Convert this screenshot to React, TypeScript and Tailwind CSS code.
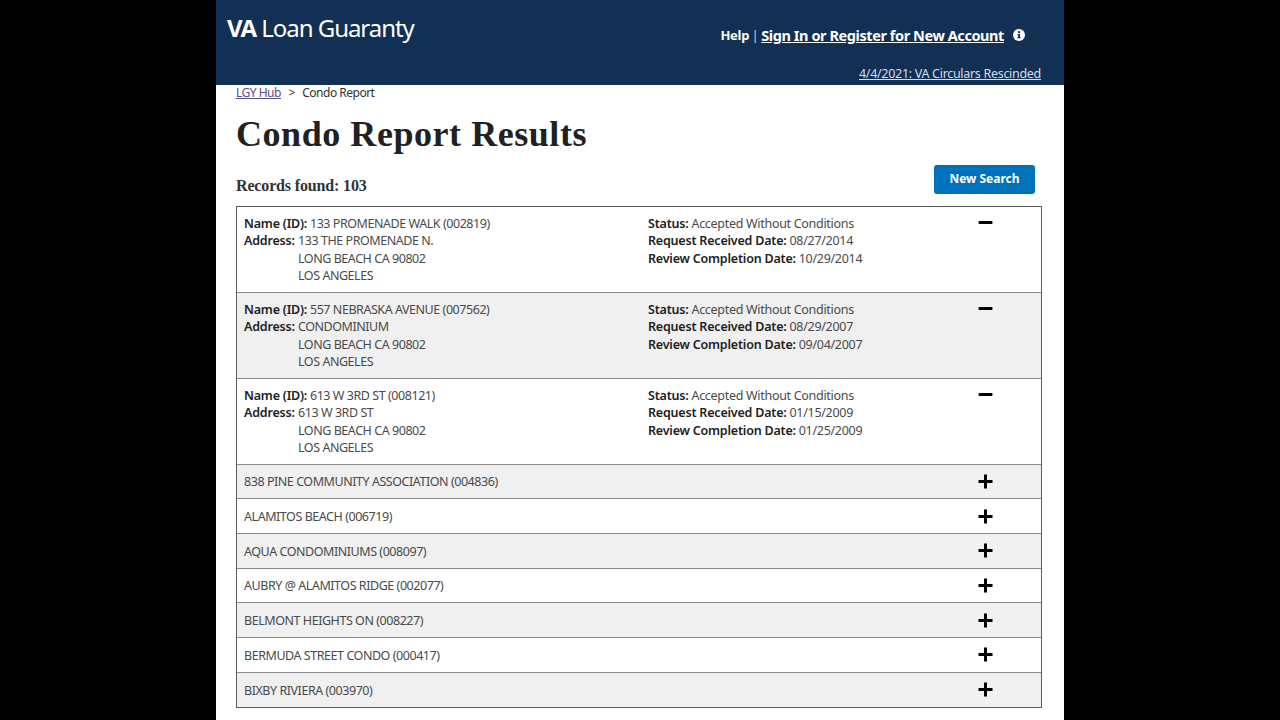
import React from 'react';

const sans = "font-['Noto_Sans',sans-serif]";

function PlusIcon() {
  return (
    <svg width="15" height="15" viewBox="0 0 15 15" className="block">
      <path d="M6 .5h3V6h5.5v3H9v5.5H6V9H.5V6H6z" fill="#000" />
    </svg>
  );
}

function MinusIcon() {
  return (
    <svg width="15" height="15" viewBox="0 0 15 15" className="block">
      <rect x=".5" y="6" width="14" height="3" rx="1" fill="#000" />
    </svg>
  );
}

function InfoIcon() {
  return (
    <svg width="12" height="12" viewBox="0 0 12 12" className="block">
      <circle cx="6" cy="6" r="6" fill="#fff" />
      <rect x="5" y="2.2" width="2" height="1.8" fill="#12304f" />
      <path d="M4.4 5h2.6v3.2h.8v1H4.4v-1h.8V6h-.8z" fill="#12304f" />
    </svg>
  );
}

const expanded = [
  { name: '133 PROMENADE WALK (002819)', addr: '133 THE PROMENADE N.', status: 'Accepted Without Conditions', received: '08/27/2014', done: '10/29/2014', shade: false },
  { name: '557 NEBRASKA AVENUE (007562)', addr: 'CONDOMINIUM', status: 'Accepted Without Conditions', received: '08/29/2007', done: '09/04/2007', shade: true },
  { name: '613 W 3RD ST (008121)', addr: '613 W 3RD ST', status: 'Accepted Without Conditions', received: '01/15/2009', done: '01/25/2009', shade: false },
];

const collapsed = [
  { name: '838 PINE COMMUNITY ASSOCIATION (004836)', shade: true },
  { name: 'ALAMITOS BEACH (006719)', shade: false },
  { name: 'AQUA CONDOMINIUMS (008097)', shade: true },
  { name: 'AUBRY @ ALAMITOS RIDGE (002077)', shade: false },
  { name: 'BELMONT HEIGHTS ON (008227)', shade: true },
  { name: 'BERMUDA STREET CONDO (000417)', shade: false },
  { name: 'BIXBY RIVIERA (003970)', shade: true },
];

function Label({ children }: any) {
  return <b className="font-semibold tracking-[-0.2px] text-[#212121]">{children}</b>;
}

function ExpandedRow({ row }: any) {
  return (
    <div className={`flex h-[86px] border-b border-[#8a8a8a] pl-[7px] pt-[8.5px] ${row.shade ? 'bg-[#f0f0f0]' : 'bg-white'}`}>
      <div className="w-[404px] shrink-0">
        <div><Label>Name (ID):</Label> {row.name}</div>
        <div className="flex">
          <div className="w-[54px] shrink-0"><Label>Address:</Label></div>
          <div>
            <div>{row.addr}</div>
            <div>LONG BEACH CA 90802</div>
            <div>LOS ANGELES</div>
          </div>
        </div>
      </div>
      <div className="w-[330px] shrink-0 tracking-[-0.3px]">
        <div><Label>Status:</Label> {row.status}</div>
        <div><Label>Request Received Date:</Label> {row.received}</div>
        <div><Label>Review Completion Date:</Label> {row.done}</div>
      </div>
      <div className="-mt-[0.5px]"><MinusIcon /></div>
    </div>
  );
}

function CollapsedRow({ row }: any) {
  return (
    <div className={`flex h-[34.7px] items-center border-b border-[#8a8a8a] pl-[7px] last:border-b-0 ${row.shade ? 'bg-[#f0f0f0]' : 'bg-white'}`}>
      <div className="w-[734px] shrink-0 pt-[1px]">{row.name}</div>
      <PlusIcon />
    </div>
  );
}

export default function App() {
  return (
    <div className="flex h-[720px] justify-center overflow-hidden bg-black">
      <div className={`h-full w-[848px] bg-white ${sans}`}>
        <header className="flex h-[85px] justify-between bg-[#122f54] pl-[11px] pr-[23px] text-white">
          <div className="pt-[11px] text-[24px] leading-[33px] tracking-[-1.05px]"><b className="font-bold">VA</b> Loan Guaranty</div>
          <div className="flex flex-col items-end">
            <div className="mt-[25px] flex items-center text-[13px] leading-[20px] font-bold">
              <span className="tracking-[-0.3px]">Help</span>
              <span className="mx-[2.5px] font-normal text-[#c8d0da]">|</span>
              <a className="text-[14.5px] tracking-[-0.42px] underline">Sign In or Register for New Account</a>
              <span className="mr-[16px] ml-[9px]"><InfoIcon /></span>
            </div>
            <a className="mt-[20px] text-[12.5px] leading-[18px] tracking-[-0.3px] text-[#d5dde6] underline">4/4/2021: VA Circulars Rescinded</a>
          </div>
        </header>

        <div className="px-5">
          <nav className="flex h-[16px] items-center text-[12px] tracking-[-0.5px] text-[#323232]">
            <a className="text-[#5b4a8a] underline">LGY Hub</a>
            <span className="mx-[7.5px]">&gt;</span>
            <span>Condo Report</span>
          </nav>
          <h1 className="mt-[11px] text-[36px] leading-[44px] font-bold tracking-[0.55px] text-[#212121] font-['Liberation_Serif',serif]">Condo Report Results</h1>
          <div className="mt-[8.5px] flex items-start justify-between pr-[9px]">
            <div className="mt-[9.5px] text-[16px] leading-[24px] font-bold tracking-[-0.15px] text-[#323232] font-['Liberation_Serif',serif]">Records found: 103</div>
            <button className="h-[29px] w-[101px] rounded-[3px] bg-[#0071bb] text-[12px] font-bold text-white">New Search</button>
          </div>
          <div className="mt-[7.5px] w-[806px] border border-[#5c5c5c] text-[12.5px] leading-[17.33px] tracking-[-0.45px] text-[#4a4a4a]">
            {expanded.map((row) => <ExpandedRow key={row.name} row={row} />)}
            {collapsed.map((row) => <CollapsedRow key={row.name} row={row} />)}
          </div>
        </div>
      </div>
    </div>
  );
}
